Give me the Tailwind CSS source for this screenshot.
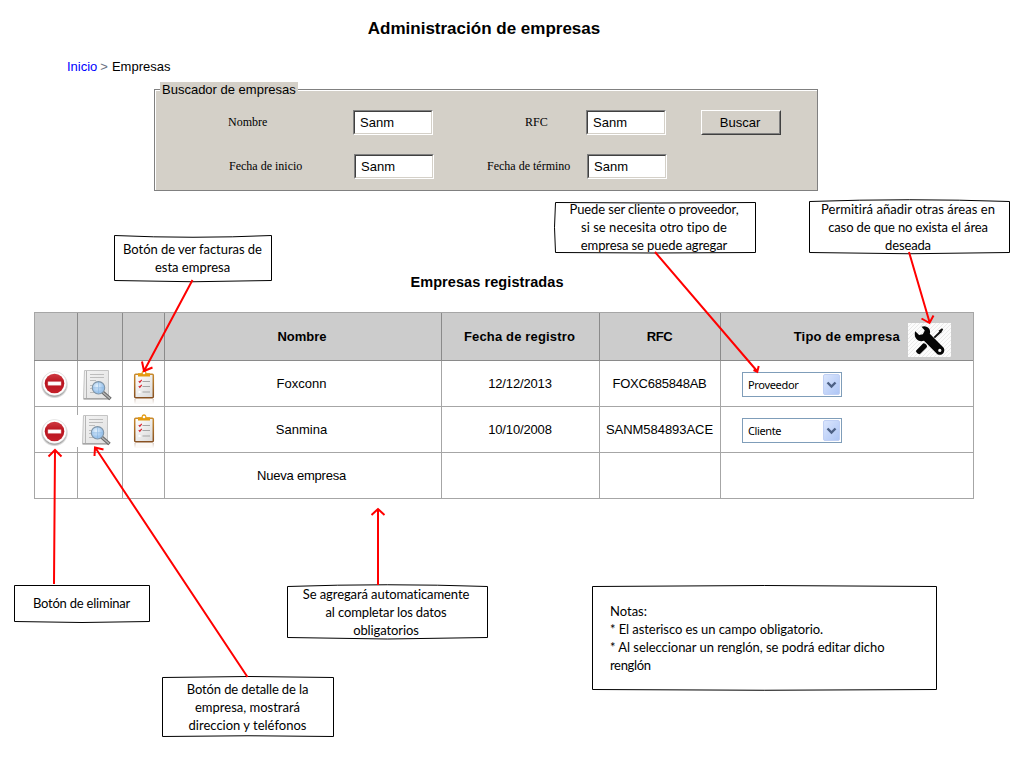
<!DOCTYPE html>
<html lang="es">
<head>
<meta charset="utf-8">
<title>Administración de empresas</title>
<script src="https://cdn.jsdelivr.net/npm/@tailwindcss/browser@4"></script>
</head>
<body class="bg-white">
<div class="relative w-[1024px] h-[768px] overflow-hidden bg-white text-black text-[13px] leading-[16px] font-['Liberation_Sans',Arial,sans-serif]">

  <h1 class="pt-[19px] w-[968px] text-center text-[17px] leading-[20px] font-bold">Administración de empresas</h1>

  <nav class="mt-[20px] ml-[67px] flex gap-[3px]">
    <a class="text-[#0000ff]">Inicio</a><span class="text-gray-500">&gt;</span><span class="ml-[1px]">Empresas</span>
  </nav>

  <!-- Search panel -->
  <section class="mt-[14px] ml-[154px] w-[664px] h-[102px] border border-[#808080] bg-[#d4d0c8]">
    <div class="h-full border-l border-t border-white">
      <div class="-mt-[9px] ml-[4px] w-[138px] h-[15px] pl-[2px] bg-[#d4d0c8] leading-[15px]">Buscador de empresas</div>
      <div class="mt-[13px] flex items-center h-[25px]">
        <label class="ml-[72px] w-[125px] pb-[2px] text-[12px] font-['Liberation_Serif',serif]">Nombre</label>
        <div class="w-[80px] h-[25px] border border-[#808080] border-r-white border-b-white"><div class="h-full border border-[#404040] border-r-[#d4d0c8] border-b-[#d4d0c8] bg-white pl-[5px] leading-[22px]">Sanm</div></div>
        <label class="ml-[92px] w-[61px] pb-[2px] text-[12px] font-['Liberation_Serif',serif]">RFC</label>
        <div class="w-[80px] h-[25px] border border-[#808080] border-r-white border-b-white"><div class="h-full border border-[#404040] border-r-[#d4d0c8] border-b-[#d4d0c8] bg-white pl-[5px] leading-[22px]">Sanm</div></div>
        <button class="ml-[35px] w-[80px] h-[25px] border border-white border-r-[#404040] border-b-[#404040]"><span class="block h-full border border-[#d4d0c8] border-r-[#808080] border-b-[#808080] pr-[2px] leading-[22px]">Buscar</span></button>
      </div>
      <div class="mt-[19px] flex items-center h-[25px]">
        <label class="ml-[73px] w-[125px] pb-[2px] text-[12px] font-['Liberation_Serif',serif]">Fecha de inicio</label>
        <div class="w-[80px] h-[25px] border border-[#808080] border-r-white border-b-white"><div class="h-full border border-[#404040] border-r-[#d4d0c8] border-b-[#d4d0c8] bg-white pl-[5px] leading-[22px]">Sanm</div></div>
        <label class="ml-[53px] w-[100px] pb-[2px] text-[12px] font-['Liberation_Serif',serif]">Fecha de término</label>
        <div class="w-[80px] h-[25px] border border-[#808080] border-r-white border-b-white"><div class="h-full border border-[#404040] border-r-[#d4d0c8] border-b-[#d4d0c8] bg-white pl-[5px] leading-[22px]">Sanm</div></div>
      </div>
    </div>
  </section>

  <h2 class="mt-[83px] w-[974px] text-center text-[14.5px] leading-[16px] font-bold tracking-[0.08px]">Empresas registradas</h2>

  <!-- Company table -->
  <div class="mt-[22px] ml-[34px] w-[940px] border-r border-b border-[#a6a6a6]">
    <div class="grid grid-cols-[43px_45px_42px_277px_158px_121px_252px] h-[48px] bg-[#cccccc] border-t border-[#a6a6a6] font-bold">
      <div class="border-l border-[#a6a6a6]"></div>
      <div class="border-l border-[#8a8a8a]"></div>
      <div class="border-l border-[#8a8a8a]"></div>
      <div class="border-l border-[#8a8a8a] flex items-center justify-center pt-px pr-[2px]">Nombre</div>
      <div class="border-l border-[#8a8a8a] flex items-center justify-center pt-px pr-[2px] tracking-[0.16px]">Fecha de registro</div>
      <div class="border-l border-[#8a8a8a] flex items-center justify-center pt-px pr-px tracking-[-0.4px]">RFC</div>
      <div class="border-l border-[#8a8a8a] flex items-center justify-end pr-[22px] pt-[7px]">
        <span class="mr-[8px] -mt-[6px] tracking-[0.22px]">Tipo de empresa</span>
        <svg class="-mr-px" width="43" height="34" viewBox="0 0 43 34">
          <defs><pattern id="hatch" width="4" height="4" patternUnits="userSpaceOnUse"><rect width="4" height="4" fill="#fcfcfc"/><path d="M-1 5L5 -1" stroke="#eaeaea" stroke-width="1"/></pattern></defs>
          <rect width="43" height="34" fill="url(#hatch)"/>
          <path d="M26.3 14.6L33 8.2" stroke="#111" stroke-width="2" fill="none"/>
          <path d="M30.5 7.8L34 5.2L35.2 6.4L32.8 10Z" fill="#111"/>
          <path d="M8.2 27.6L15 20.4Q17 19.6 18.7 22.3Q19.4 23.6 18.6 24.4L12 31Q10.6 31.6 9 30Q7.5 28.6 8.2 27.6Z" fill="#050505"/>
          <path fill-rule="evenodd" d="M13.5 3.8C16.2 2.6 19.6 3.3 21.2 5.8C22.2 7.5 22.3 9.2 21.8 10.8L34.7 23.8C36.6 25.2 36.8 28 35.500 29.900C33.700 32.400 30 32.400 28.400 30.200L16 17.700C13 18.800 9.700 18 7.900 15.300C6.700 13.300 6.300 10.500 7.300 8.200L11.100 12.100L14.800 11.200L16.800 7.600ZM31.800 25.800A1.600 1.600 0 1 0 31.800 29A1.600 1.600 0 1 0 31.800 25.800Z" fill="#050505"/>
        </svg>
      </div>
    </div>

    <div class="grid grid-cols-[43px_45px_42px_277px_158px_121px_252px] h-[46px] border-t border-[#8a8a8a]">
      <div class="border-l border-[#a6a6a6] pt-[6px] pl-[3px]"><svg width="34" height="34"><use href="#remove"/></svg></div>
      <div class="border-l border-[#a6a6a6] pt-[8px] pl-[4px]"><svg width="34" height="34"><use href="#detail"/></svg></div>
      <div class="border-l border-[#a6a6a6] pt-[7px] pl-[7px]"><svg width="30" height="36"><use href="#clip"/></svg></div>
      <div class="border-l border-[#a6a6a6] flex items-center justify-center pt-px pr-[3px]">Foxconn</div>
      <div class="border-l border-[#a6a6a6] flex items-center justify-center pt-px pr-px tracking-[-0.15px]">12/12/2013</div>
      <div class="border-l border-[#a6a6a6] flex items-center justify-center pt-px pr-px tracking-[-0.23px]">FOXC685848AB</div>
      <div class="border-l border-[#a6a6a6] pt-[11px] pl-[21px]">
        <div class="w-[100px] h-[25px] border border-[#7f9db9] bg-white flex items-center pl-[5px] pr-px text-[11px] tracking-[-0.32px] font-['Noto_Sans',sans-serif]">
          <span class="flex-1">Proveedor</span><svg width="17" height="21"><use href="#drop"/></svg>
        </div>
      </div>
    </div>

    <div class="grid grid-cols-[43px_45px_42px_277px_158px_121px_252px] h-[46px] border-t border-[#a6a6a6]">
      <div class="border-l border-[#a6a6a6] pt-[8px] pl-[3px]"><svg width="34" height="34"><use href="#remove"/></svg></div>
      <div class="relative border-l border-[#a6a6a6] pt-[7px] pl-[3px]">
        <span class="absolute -left-px top-[8px] w-[4px] h-[32px] bg-white"></span>
        <svg width="34" height="34"><use href="#detail"/></svg>
      </div>
      <div class="border-l border-[#a6a6a6] pt-[5px] pl-[7px]"><svg width="30" height="36"><use href="#clip"/></svg></div>
      <div class="border-l border-[#a6a6a6] flex items-center justify-center pt-px pr-[3px]">Sanmina</div>
      <div class="border-l border-[#a6a6a6] flex items-center justify-center pt-px pr-px tracking-[-0.15px]">10/10/2008</div>
      <div class="border-l border-[#a6a6a6] flex items-center justify-center pt-px pr-px tracking-[-0.05px]">SANM584893ACE</div>
      <div class="border-l border-[#a6a6a6] pt-[11px] pl-[21px]">
        <div class="w-[100px] h-[25px] border border-[#7f9db9] bg-white flex items-center pl-[5px] pr-px text-[11px] tracking-[-0.4px] font-['Noto_Sans',sans-serif]">
          <span class="flex-1">Cliente</span><svg width="17" height="21"><use href="#drop"/></svg>
        </div>
      </div>
    </div>

    <div class="grid grid-cols-[43px_45px_42px_277px_158px_121px_252px] h-[46px] border-t border-[#a6a6a6]">
      <div class="border-l border-[#a6a6a6]"></div>
      <div class="border-l border-[#a6a6a6]"></div>
      <div class="border-l border-[#a6a6a6]"></div>
      <div class="border-l border-[#a6a6a6] flex items-center justify-center pt-px pr-[3px] tracking-[-0.21px]">Nueva empresa</div>
      <div class="border-l border-[#a6a6a6]"></div>
      <div class="border-l border-[#a6a6a6]"></div>
      <div class="border-l border-[#a6a6a6]"></div>
    </div>
  </div>

  <!-- Icon definitions -->
  <svg class="absolute w-0 h-0">
    <defs>
      <linearGradient id="redg" x1="0" y1="0" x2="0" y2="1"><stop offset="0" stop-color="#cf3a42"/><stop offset=".45" stop-color="#b9141f"/><stop offset="1" stop-color="#c4202a"/></linearGradient>
      <radialGradient id="shade"><stop offset=".75" stop-color="#666"/><stop offset="1" stop-color="#999" stop-opacity="0"/></radialGradient>
      <linearGradient id="page" x1="0" y1="0" x2="1" y2="1"><stop offset="0" stop-color="#f4f4f4"/><stop offset="1" stop-color="#e0e0e0"/></linearGradient>
      <radialGradient id="glass" cx=".4" cy=".35"><stop offset="0" stop-color="#e3f1fd"/><stop offset="1" stop-color="#9cc4ec"/></radialGradient>
      <linearGradient id="paper" x1="0" y1="0" x2="1" y2="1"><stop offset="0" stop-color="#fff"/><stop offset="1" stop-color="#d9d9d9"/></linearGradient>
      <linearGradient id="brown" x1="0" y1="0" x2="0" y2="1"><stop offset="0" stop-color="#c98a2c"/><stop offset="1" stop-color="#875021"/></linearGradient>
      <linearGradient id="fade" x1="0" y1="0" x2="0" y2="1"><stop offset="0" stop-color="#c9b8ac"/><stop offset="1" stop-color="#fff"/></linearGradient>
      <linearGradient id="blue" x1="0" y1="0" x2="1" y2="1"><stop offset="0" stop-color="#dbe6fd"/><stop offset="1" stop-color="#adc5f5"/></linearGradient>
    </defs>
    <symbol id="remove" viewBox="0 0 34 34">
      <circle cx="16.5" cy="17.8" r="13.8" fill="url(#shade)"/>
      <circle cx="16.5" cy="16.5" r="12" fill="#fff" stroke="#dcdcdc" stroke-width=".6"/>
      <circle cx="16.5" cy="16.5" r="9.8" fill="url(#redg)"/>
      <rect x="10" y="14.8" width="13" height="3.4" fill="#fff" stroke="#e9b8bb" stroke-width=".5"/>
    </symbol>
    <symbol id="detail" viewBox="0 0 34 34">
      <path d="M2.5 1.500H26.500V29.500H1.500Z" fill="url(#page)" stroke="#c4c4c4" stroke-width="1"/>
      <path d="M4.500 2V29" stroke="#b5b5b5" stroke-width="1"/>
      <path d="M1.500 30H27" stroke="#888" stroke-width="1"/>
      <path d="M8 5.500H22M8 8.500H22M8 11.500H14M8 16.500H12M8 19.500H12M8 23.500H22" stroke="#bdbdbd" stroke-width="1.2"/>
      <path d="M20.500 23L28.500 30" stroke="#666" stroke-width="3.600"/>
      <path d="M21 23.500L28 29.500" stroke="#b5b5b5" stroke-width="1.600"/>
      <circle cx="16.500" cy="18.800" r="6.200" fill="url(#glass)" stroke="#7e93a5" stroke-width="1.100"/>
      <path d="M16.500 13V24.500M10.500 18.800H22.500" stroke="#7eaddb" stroke-width=".8" opacity=".6"/>
    </symbol>
    <symbol id="clip" viewBox="0 0 30 36">
      <rect x="4.700" y="31" width="18.600" height="5" fill="#fbf9f7"/><rect x="4.500" y="31" width="1" height="5" fill="url(#fade)"/><rect x="22.700" y="31" width="1" height="5" fill="url(#fade)"/>
      <rect x="4.700" y="6.200" width="18.600" height="23.600" rx="1" fill="url(#paper)" stroke="url(#brown)" stroke-width="1.500"/>
      <path d="M8 5.200H11.500Q11.800 2.300 14 2.300Q16.200 2.300 16.500 5.200H20V8.400H8Z" fill="#e39b12"/>
      <circle cx="14" cy="5" r="1.300" fill="#fff"/>
      <path d="M12.500 13.500H20M12.500 18.500H20M12.500 24H20" stroke="#a5a5a5" stroke-width="1"/>
      <path d="M8.800 13L9.800 14.300L11.700 11.800M8.800 18L9.800 19.300L11.700 16.800" stroke="#d8202a" stroke-width="1.200" fill="none"/>
      <rect x="8.500" y="23" width="2" height="2" fill="#fff"/>
    </symbol>
    <symbol id="drop" viewBox="0 0 17 21">
      <rect x=".5" y=".5" width="16" height="20" rx="1.5" fill="url(#blue)" stroke="#c0d0f4"/>
      <path d="M4.500 8.500L8.500 12.500L12.500 8.500" fill="none" stroke="#4d6185" stroke-width="2.400"/>
    </symbol>
  </svg>

  <!-- Hand-drawn frames and arrows of the annotations -->
  <svg class="absolute inset-0" width="1024" height="768" viewBox="0 0 1024 768">
    <g fill="#fff" stroke="#000" stroke-width="1">
      <path d="M114.5 235.5Q193 239 271.5 235.5V280.5Q193 283 114.5 280.5Z"/>
      <path d="M555.5 202.5Q655 203.5 755.5 202.5V252.5Q655 253.5 555.5 252.5Q553.5 227 555.5 202.5Z"/>
      <path d="M809.5 201.5Q909 198 1009.5 201.5V252.5Q909 255 809.5 252.5Z"/>
      <path d="M14.5 585.5H149.5V621.5Q82 623.5 14.5 621.5Z"/>
      <path d="M287.5 586.5Q387 583 487.5 586.5V637.5Q387 640.5 287.5 637.5Z"/>
      <path d="M162.5 677.5Q248 675.5 333.5 677.5V736.5Q248 735 162.5 736.5Z"/>
      <path d="M592.5 586.5Q764 584.5 936.5 586.5V689.5Q764 691 592.5 689.5Z"/>
    </g>
    <g fill="none" stroke="#ff0000" stroke-width="2">
      <path d="M192.5 280L144 371M142 361.5L144 371L152.5 367.5"/>
      <path d="M655 252L757 371M758.7 366L757.3 371.8L753.5 370"/>
      <path d="M909 252L929.5 322M921.5 318.5L929.5 323L933.5 315.5"/>
      <path d="M54 584L55 450M48.5 456.5L55 450L61.5 456.5"/>
      <path d="M247.5 677L95.5 448M94.5 456L95 447.5L103.500 449.500"/>
      <path d="M378 585V509M371.500 515L378 509L384.500 515"/>
    </g>
  </svg>

  <!-- Annotation texts -->
  <div class="absolute left-[114px] top-[240px] w-[157px] text-center leading-[18px] font-['Lato',sans-serif]">
    <p class="tracking-[-0.04px]">Botón de ver facturas de</p><p>esta empresa</p>
  </div>
  <div class="absolute left-[554px] top-[200px] w-[200px] text-center leading-[18px] font-['Lato',sans-serif]">
    <p class="tracking-[-0.12px]">Puede ser cliente o proveedor,</p><p class="tracking-[0.03px]">si se necesita otro tipo de</p><p class="tracking-[-0.1px]">empresa se puede agregar</p>
  </div>
  <div class="absolute left-[808px] top-[200px] w-[200px] text-center leading-[18px] font-['Lato',sans-serif]">
    <p class="tracking-[0.04px]">Permitirá añadir otras áreas en</p><p class="tracking-[-0.12px]">caso de que no exista el área</p><p class="tracking-[-0.15px]">deseada</p>
  </div>
  <div class="absolute left-[14px] top-[594px] w-[135px] text-center leading-[18px] font-['Lato',sans-serif]">
    <p class="tracking-[-0.22px]">Botón de eliminar</p>
  </div>
  <div class="absolute left-[286px] top-[585px] w-[200px] text-center leading-[18px] font-['Lato',sans-serif]">
    <p class="tracking-[-0.09px]">Se agregará automaticamente</p><p class="tracking-[-0.12px]">al completar los datos</p><p class="tracking-[-0.1px]">obligatorios</p>
  </div>
  <div class="absolute left-[162px] top-[680px] w-[171px] text-center leading-[18px] font-['Lato',sans-serif]">
    <p class="tracking-[-0.12px]">Botón de detalle de la</p><p>empresa, mostrará</p><p>direccion y teléfonos</p>
  </div>
  <div class="absolute left-[610px] top-[602px] w-[320px] leading-[18px] font-['Lato',sans-serif]">
    <p>Notas:</p><p class="tracking-[-0.07px]">* El asterisco es un campo obligatorio.</p><p class="tracking-[-0.05px]">* Al seleccionar un renglón, se podrá editar dicho</p><p class="tracking-[-0.35px]">renglón</p>
  </div>
</div>
</body>
</html>
